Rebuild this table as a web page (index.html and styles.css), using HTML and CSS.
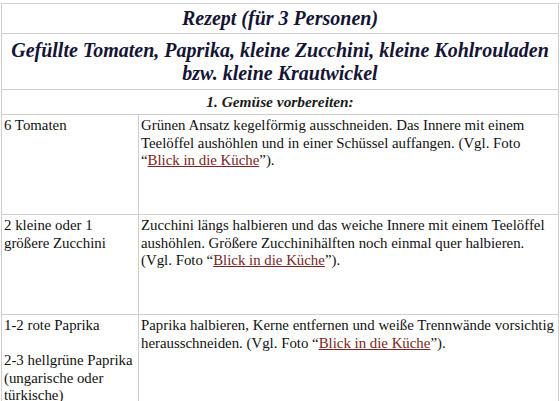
FILE: index.html
```html
<!DOCTYPE html>
<html lang="de">
<head>
<meta charset="utf-8">
<title>Rezept</title>
<link rel="stylesheet" href="styles.css">
</head>
<body>
<table class="recipe">
  <colgroup>
    <col class="col-ingr">
    <col class="col-instr">
  </colgroup>
  <tr class="row-title">
    <td colspan="2"><h2 class="title">Rezept (für 3 Personen)</h2></td>
  </tr>
  <tr class="row-dish">
    <td colspan="2"><h1 class="dish">Gefüllte Tomaten, Paprika, kleine Zucchini, kleine Kohlrouladen bzw. kleine Krautwickel</h1></td>
  </tr>
  <tr class="row-section">
    <td colspan="2"><h3 class="section">1. Gemüse vorbereiten:</h3></td>
  </tr>
  <tr class="row-step row-tall">
    <td class="ingr">6 Tomaten</td>
    <td class="instr">Grünen Ansatz kegelförmig ausschneiden. Das Innere mit einem Teelöffel aushöhlen und in einer Schüssel auffangen. (Vgl. Foto “<a href="#">Blick in die Küche</a>”).</td>
  </tr>
  <tr class="row-step row-tall">
    <td class="ingr">2 kleine oder 1 größere Zucchini</td>
    <td class="instr">Zucchini längs halbieren und das weiche Innere mit einem Teelöffel aushöhlen. Größere Zucchinihälften noch einmal quer halbieren. (Vgl. Foto “<a href="#">Blick in die Küche</a>”).</td>
  </tr>
  <tr class="row-step">
    <td class="ingr"><p class="line">1-2 rote Paprika</p><p class="line gap">2-3 hellgrüne Paprika (ungarische oder türkische)</p></td>
    <td class="instr">Paprika halbieren, Kerne entfernen und weiße Trennwände vorsichtig herausschneiden. (Vgl. Foto “<a href="#">Blick in die Küche</a>”).</td>
  </tr>
</table>
</body>
</html>
```

FILE: styles.css
```css
html, body {
  margin: 0;
  padding: 0;
  background: #ffffff;
}
body {
  font-family: "Liberation Serif", "Times New Roman", serif;
  color: #111111;
  padding: 3px 0 0 1px;
}
.recipe {
  width: 558px;
  border-collapse: collapse;
  table-layout: fixed;
}
.col-ingr {
  width: 137px;
}
.recipe td {
  border: 1px solid #cfcfcf;
  padding: 0;
  vertical-align: top;
}
.title, .dish, .section {
  margin: 0;
  text-align: center;
  font-style: italic;
  font-weight: bold;
}
.title {
  font-size: 20px;
  line-height: 29px;
  color: #141434;
}
.dish {
  font-size: 20px;
  line-height: 23px;
  padding: 5px 0 4px;
  color: #141434;
}
.section {
  font-size: 15.4px;
  line-height: 24px;
  color: #1a1a1a;
}
.row-step td {
  font-size: 14.85px;
  line-height: 17.5px;
  padding: 2px 0 0 2px;
}
.row-tall td {
  height: 97px;
}
.line {
  margin: 0;
}
.gap {
  margin-top: 17.5px;
}
.instr a {
  color: #7a2424;
  text-decoration: underline;
}
```
